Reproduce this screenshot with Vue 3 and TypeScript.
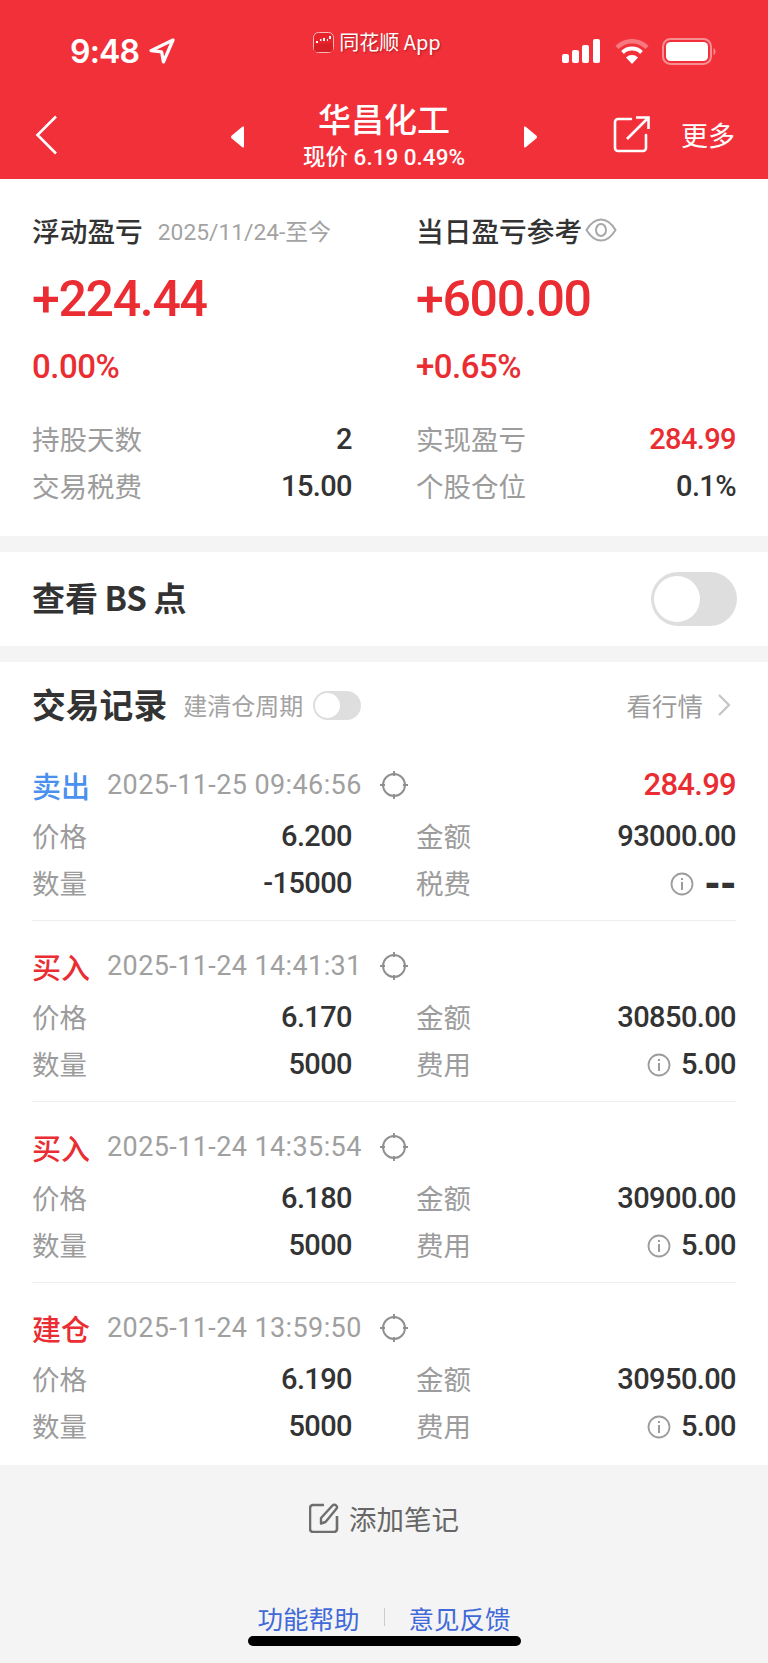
<script setup lang="ts">
interface Rec { side: string; sideClass: string; time: string; pnl?: string; price: string; amount: string; qty: string; feeLabel: string; fee: string }
const records: Rec[] = [
  { side: '卖出', sideClass: 'blue', time: '2025-11-25 09:46:56', pnl: '284.99', price: '6.200', amount: '93000.00', qty: '-15000', feeLabel: '税费', fee: '--' },
  { side: '买入', sideClass: 'red', time: '2025-11-24 14:41:31', price: '6.170', amount: '30850.00', qty: '5000', feeLabel: '费用', fee: '5.00' },
  { side: '买入', sideClass: 'red', time: '2025-11-24 14:35:54', price: '6.180', amount: '30900.00', qty: '5000', feeLabel: '费用', fee: '5.00' },
  { side: '建仓', sideClass: 'red', time: '2025-11-24 13:59:50', price: '6.190', amount: '30950.00', qty: '5000', feeLabel: '费用', fee: '5.00' },
]
</script>

<template>
  <div class="page">
    <header class="top">
      <div class="status">
        <div class="time-wrap">
          <span class="time">9:48</span>
          <svg class="loc" width="26" height="26" viewBox="0 0 26 26"><path d="M24 2 2 12.6l10.6 1.2L14.4 24Z" fill="none" stroke="#fff" stroke-width="3.2" stroke-linejoin="round"/></svg>
        </div>
        <div class="app-tag">
          <svg width="21" height="21" viewBox="0 0 21 21"><rect x=".5" y=".5" width="20" height="20" rx="5" fill="#e8232c" stroke="#f9b9bb"/><path d="M3 10h2M7 8h1.500M11 9V6M14 8h1M17 4v3" stroke="#fff" stroke-width="2"/><path d="M1 12q9 0 19-1v6a3 3 0 0 1-3 3H4a3 3 0 0 1-3-3Z" fill="#d81e27"/></svg>
          <span>同花顺 App</span>
        </div>
        <div class="sys">
          <svg width="38" height="24" viewBox="0 0 38 24"><rect x="0" y="15" width="7" height="9" rx="2" fill="#fff"/><rect x="10" y="11" width="7" height="13" rx="2" fill="#fff"/><rect x="20" y="6" width="7" height="18" rx="2" fill="#fff"/><rect x="31" y="0" width="7" height="24" rx="2" fill="#fff"/></svg>
          <svg class="wifi" width="34" height="25" viewBox="0 0 34 25"><path d="M2 8.500a21 21 0 0 1 30 0" fill="none" stroke="#fff" stroke-opacity=".35" stroke-width="4.500"/><path d="M7.500 13.500a13.500 13.500 0 0 1 19 0" fill="none" stroke="#fff" stroke-width="4"/><path d="M17 25l-6-6.500a8.500 8.500 0 0 1 12 0Z" fill="#fff"/></svg>
          <svg class="bat" width="54" height="27" viewBox="0 0 54 27"><rect x="1" y="1" width="48" height="25" rx="7.500" fill="none" stroke="#fff" stroke-opacity=".45" stroke-width="2"/><rect x="4" y="4" width="42" height="19" rx="4.500" fill="#fff"/><path d="M51.500 10a4 4 0 0 1 0 7Z" fill="#fff" fill-opacity=".45"/></svg>
        </div>
      </div>
      <nav class="nav">
        <svg class="back" width="24" height="40" viewBox="0 0 24 40"><path d="M21 1.500 2.500 20 21 38.500" fill="none" stroke="#fff" stroke-width="2.600"/></svg>
        <div class="stock">
          <svg width="16" height="22" viewBox="0 0 16 22"><path d="M14 1.500v19a1 1 0 0 1-1.700.7L1.500 12.300a2 2 0 0 1 0-2.600L12.300.8A1 1 0 0 1 14 1.500Z" fill="#fff"/></svg>
          <div class="stock-text">
            <div class="stock-name">华昌化工</div>
            <div class="stock-sub">现价 6.19 0.49%</div>
          </div>
          <svg width="16" height="22" viewBox="0 0 16 22"><path d="M2 1.500v19a1 1 0 0 0 1.700.7l10.800-8.900a2 2 0 0 0 0-2.600L3.700.8A1 1 0 0 0 2 1.500Z" fill="#fff"/></svg>
        </div>
        <div class="nav-right">
          <svg width="37" height="37" viewBox="0 0 37 37"><path d="M18 3H5a3 3 0 0 0-3 3v26a3 3 0 0 0 3 3h25a3 3 0 0 0 3-3V19" fill="none" stroke="#fff" stroke-width="2.600" stroke-linecap="round"/><path d="M14 23 35 2M23 1.500h12.500V13" fill="none" stroke="#fff" stroke-width="2.600"/></svg>
          <span class="more">更多</span>
        </div>
      </nav>
    </header>

    <section class="summary card">
      <div class="col">
        <div class="title-row"><span class="title">浮动盈亏</span><span class="range">2025/11/24-至今</span></div>
        <div class="big">+224.44</div>
        <div class="pct">0.00%</div>
        <div class="kv"><span class="k">持股天数</span><span class="v">2</span></div>
        <div class="kv"><span class="k">交易税费</span><span class="v">15.00</span></div>
      </div>
      <div class="col">
        <div class="title-row"><span class="title">当日盈亏参考</span>
          <svg class="eye" width="32" height="24" viewBox="0 0 32 24"><path d="M1.500 12C6 4.500 10.500 1.500 16 1.500S26 4.500 30.500 12C26 19.500 21.500 22.500 16 22.500S6 19.500 1.500 12Z" fill="none" stroke="#a8a8a8" stroke-width="2"/><ellipse cx="16" cy="12" rx="5" ry="6" fill="none" stroke="#a8a8a8" stroke-width="2"/></svg>
        </div>
        <div class="big">+600.00</div>
        <div class="pct">+0.65%</div>
        <div class="kv"><span class="k">实现盈亏</span><span class="v redv">284.99</span></div>
        <div class="kv"><span class="k">个股仓位</span><span class="v">0.1%</span></div>
      </div>
    </section>

    <section class="bs card">
      <span class="bs-title">查看 BS 点</span>
      <span class="toggle lg"><i></i></span>
    </section>

    <section class="trades card">
      <div class="trades-head">
        <span class="trades-title">交易记录</span>
        <span class="cycle">建清仓周期</span>
        <span class="toggle sm"><i></i></span>
        <span class="market">看行情</span>
        <svg class="chev" width="14" height="24" viewBox="0 0 14 24"><path d="M2 2l10 10L2 22" fill="none" stroke="#c4c4c4" stroke-width="2.200"/></svg>
      </div>
      <div class="list">
        <article v-for="r in records" :key="r.time" class="rec">
          <div class="rec-head">
            <span class="side" :class="r.sideClass">{{ r.side }}</span>
            <span class="stamp">{{ r.time }}</span>
            <svg class="target" width="28" height="28" viewBox="0 0 28 28"><circle cx="14" cy="14" r="11" fill="none" stroke="#8f8f8f" stroke-width="1.900"/><path d="M14 0v5M14 23v5M0 14h5M23 14h5" stroke="#8f8f8f" stroke-width="1.900"/></svg>
            <span v-if="r.pnl" class="pnl">{{ r.pnl }}</span>
          </div>
          <div class="rec-grid">
            <div class="kv"><span class="k">价格</span><span class="v">{{ r.price }}</span></div>
            <div class="kv"><span class="k">金额</span><span class="v">{{ r.amount }}</span></div>
            <div class="kv"><span class="k">数量</span><span class="v">{{ r.qty }}</span></div>
            <div class="kv"><span class="k">{{ r.feeLabel }}</span>
              <span class="v fee">
                <svg width="24" height="24" viewBox="0 0 24 24"><circle cx="12" cy="12" r="10.500" fill="none" stroke="#9c9c9c" stroke-width="1.800"/><path d="M12 10v8M12 6v2" stroke="#9c9c9c" stroke-width="2"/></svg>
                <span :class="{ dash: r.fee === '--' }">{{ r.fee }}</span>
              </span>
            </div>
          </div>
        </article>
      </div>
    </section>

    <footer class="foot">
      <div class="note">
        <svg width="30" height="30" viewBox="0 0 30 30"><path d="M15 2H4a3 3 0 0 0-3 3v21a3 3 0 0 0 3 3h21a3 3 0 0 0 3-3V13" fill="none" stroke="#6e6e6e" stroke-width="2.600"/><path d="M12 20.500V15L23.500 2.500a2.500 2.500 0 0 1 3.700 0 2.500 2.500 0 0 1 0 3.500L16.500 19Z" fill="none" stroke="#6e6e6e" stroke-width="2.400" stroke-linejoin="round"/></svg>
        <span>添加笔记</span>
      </div>
      <div class="links">
        <a>功能帮助</a><i class="sep"></i><a>意见反馈</a>
      </div>
    </footer>
    <div class="home"></div>
  </div>
</template>

<style scoped>
.page { position: relative; width: 768px; height: 1663px; overflow: hidden; background: #f4f4f4; font-family: "Noto Sans CJK SC", Roboto, sans-serif; color: #333; }
.card { background: #fff; }
.top { height: 179px; background: #f2303a; color: #fff; }
.status { height: 86px; padding: 32px 52px 0 70px; box-sizing: border-box; display: grid; grid-template-columns: 1fr auto 1fr; align-items: start; }
.time-wrap { display: flex; align-items: center; gap: 10px; height: 40px; }
.time { font: 600 32px/40px Inter, sans-serif; letter-spacing: -.8px; }
.loc { margin-top: -2px; }
.app-tag { display: flex; align-items: center; gap: 5px; height: 26px; font-size: 20px; line-height: 26px; text-shadow: 1px 1px 2px rgba(90, 0, 0, .45); margin-left: -32px; margin-top: -3px; }
.sys { display: flex; justify-content: flex-end; align-items: flex-start; gap: 14px; padding-top: 7px; }
.wifi { margin-left: 1px; }
.bat { margin-left: -1px; margin-top: -1px; }
.nav { position: relative; height: 93px; padding: 0 33px 0 35px; display: flex; align-items: center; justify-content: space-between; }
.back { margin-top: 4px; }
.stock { position: absolute; left: 230px; width: 308px; top: 0; height: 93px; box-sizing: border-box; padding-top: 8px; display: flex; align-items: center; justify-content: space-between; }
.stock-text { text-align: center; align-self: flex-start; padding-top: 3px; }
.stock-name { font-size: 33px; line-height: 42px; font-weight: 500; }
.stock-sub { font-size: 22.500px; line-height: 30px; font-family: Roboto, "Noto Sans CJK SC", sans-serif; font-weight: 500; margin-top: 3px; }
.nav-right { display: flex; align-items: center; gap: 31px; margin-top: 4px; }
.more { font-size: 27px; line-height: 40px; }

.summary { height: 357px; box-sizing: border-box; padding: 31px 32px 0; display: grid; grid-template-columns: 320px 320px; column-gap: 64px; }
.title-row { display: flex; align-items: center; height: 40px; }
.title { font-size: 27.700px; line-height: 40px; font-weight: 500; color: #333; }
.range { margin-left: 15px; font-size: 22.800px; color: #a3a3a3; font-family: Roboto, "Noto Sans CJK SC", sans-serif; }
.eye { margin-left: 3px; }
.big { margin-top: 19px; height: 60px; font: 500 50px/60px Roboto, sans-serif; letter-spacing: -1.300px; color: #ea2d32; }
.pct { margin-top: 18px; height: 40px; font: 500 33px/40px Roboto, sans-serif; letter-spacing: -.5px; color: #ea2d32; }
.pct + .kv { margin-top: 29px; }
.kv { display: flex; justify-content: space-between; align-items: center; height: 47px; }
.k { font-size: 27.500px; color: #9c9c9c; line-height: 47px; margin-top: -3px; }
.v { font: 500 29px/47px Roboto, sans-serif; letter-spacing: -.6px; color: #333; }
.redv { color: #ea2d32; }
.dash { font: 700 38px/47px "DejaVu Sans", sans-serif; letter-spacing: 0; }

.bs { margin-top: 16px; height: 94px; padding: 0 31px 0 32px; display: flex; align-items: center; justify-content: space-between; }
.bs-title { font-size: 33px; font-weight: 700; color: #333; word-spacing: -1px; margin-bottom: 4px; }
.toggle { display: block; background: #dedede; border-radius: 99px; position: relative; box-sizing: border-box; }
.toggle i { display: block; position: absolute; background: #fff; border-radius: 50%; }
.lg { width: 86px; height: 54px; }
.lg i { left: 3px; top: 4px; width: 46px; height: 46px; }
.sm { width: 48px; height: 29px; margin-left: 10px; }
.sm i { left: 2px; top: 2px; width: 25px; height: 25px; }

.trades { margin-top: 16px; height: 803px; box-sizing: border-box; padding: 18px 32px 0; }
.trades-head { display: flex; align-items: center; height: 50px; }
.trades-title { font-size: 33.800px; font-weight: 700; color: #333; line-height: 50px; margin-bottom: 2px; }
.cycle { margin-left: 16px; font-size: 24px; color: #a3a3a3; margin-bottom: 2px; }
.market { margin-left: auto; font-size: 25.500px; color: #9c9c9c; margin-right: 14px; margin-bottom: 2px; }
.chev { margin-right: 5px; }
.list { margin-top: 10px; }
.rec { height: 181px; box-sizing: border-box; padding-top: 25px; border-bottom: 1px solid #eee; }
.rec:last-child { border-bottom: 0; }
.rec-head { display: flex; align-items: center; height: 40px; }
.side { font-size: 29px; font-weight: 500; line-height: 40px; }
.blue { color: #4a90ee; }
.red { color: #ea2d32; }
.stamp { margin-left: 17px; font: 400 27px/40px Roboto, sans-serif; letter-spacing: .4px; color: #a0a0a0; }
.target { margin-left: 18px; }
.pnl { margin-left: auto; font: 500 31px/40px Roboto, sans-serif; letter-spacing: -.7px; color: #ea2d32; }
.rec-grid { margin-top: 8px; display: grid; grid-template-columns: 320px 320px; column-gap: 64px; }
.fee { display: flex; align-items: center; gap: 10px; }
.foot { height: 198px; box-sizing: border-box; padding-top: 33px; }
.note { display: flex; align-items: center; justify-content: center; gap: 10px; height: 40px; font-size: 27.500px; color: #666; }
.links { margin-top: 59px; display: flex; justify-content: center; align-items: center; height: 40px; font-size: 25.500px; color: #4169d8; }
.sep { display: block; width: 1px; height: 18px; background: #ccc; margin: 0 24px; }
.home { position: absolute; left: 248px; top: 1636px; width: 273px; height: 10px; border-radius: 5px; background: #000; }
</style>
